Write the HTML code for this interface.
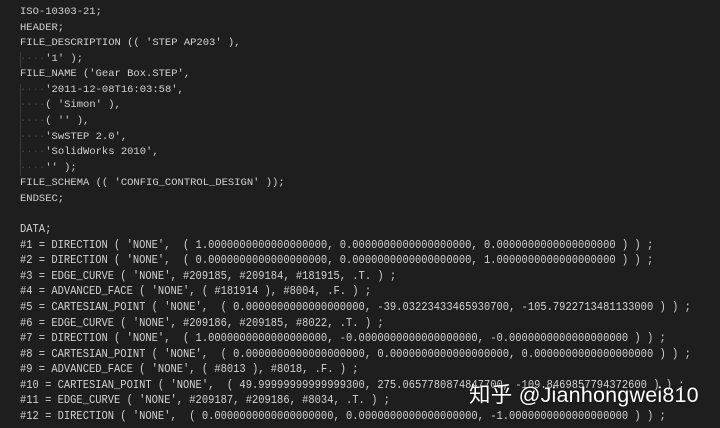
<!DOCTYPE html>
<html><head><meta charset="utf-8"><style>
html,body{margin:0;padding:0;background:#1e1e1e;width:720px;height:428px;overflow:hidden}
pre{position:absolute;left:20px;top:5px;margin:0;font-family:"Liberation Mono","DejaVu Sans Mono",monospace;font-size:10.5px;line-height:15.58px;color:#d2d2d2}
.d{color:#4a4a4a}
.c{display:inline-block;transform:scale(0.995,1.12);transform-origin:left center}
.g{position:absolute;left:20px;width:1px;background:#3a3a3a}
.wm{position:absolute;left:469px;top:378px;font-family:"Liberation Sans","Noto Sans CJK SC",sans-serif;font-size:21.5px;color:#fff;letter-spacing:0.2px;text-shadow:0 0 2px rgba(0,0,0,.6)}
</style></head><body>
<div class="g" style="top:52px;height:16px"></div>
<div class="g" style="top:84px;height:92px"></div>
<pre>ISO-10303-21;
HEADER;
FILE_DESCRIPTION (( 'STEP AP203' ),
<span class="d">····</span>'1' );
FILE_NAME ('Gear Box.STEP',
<span class="d">····</span>'2011-12-08T16:03:58',
<span class="d">····</span>( 'Simon' ),
<span class="d">····</span>( '' ),
<span class="d">····</span>'SwSTEP 2.0',
<span class="d">····</span>'SolidWorks 2010',
<span class="d">····</span>'' );
FILE_SCHEMA (( 'CONFIG_CONTROL_DESIGN' ));
ENDSEC;

<span class="c">DATA;</span>
<span class="c">#1 = DIRECTION ( 'NONE',  ( 1.0000000000000000000, 0.0000000000000000000, 0.0000000000000000000 ) ) ;</span>
<span class="c">#2 = DIRECTION ( 'NONE',  ( 0.0000000000000000000, 0.0000000000000000000, 1.0000000000000000000 ) ) ;</span>
<span class="c">#3 = EDGE_CURVE ( 'NONE', #209185, #209184, #181915, .T. ) ;</span>
<span class="c">#4 = ADVANCED_FACE ( 'NONE', ( #181914 ), #8004, .F. ) ;</span>
<span class="c">#5 = CARTESIAN_POINT ( 'NONE',  ( 0.0000000000000000000, -39.03223433465930700, -105.7922713481133000 ) ) ;</span>
<span class="c">#6 = EDGE_CURVE ( 'NONE', #209186, #209185, #8022, .T. ) ;</span>
<span class="c">#7 = DIRECTION ( 'NONE',  ( 1.0000000000000000000, -0.0000000000000000000, -0.0000000000000000000 ) ) ;</span>
<span class="c">#8 = CARTESIAN_POINT ( 'NONE',  ( 0.0000000000000000000, 0.0000000000000000000, 0.0000000000000000000 ) ) ;</span>
<span class="c">#9 = ADVANCED_FACE ( 'NONE', ( #8013 ), #8018, .F. ) ;</span>
<span class="c">#10 = CARTESIAN_POINT ( 'NONE',  ( 49.99999999999999300, 275.0657780874847700, -109.8469857794372600 ) ) ;</span>
<span class="c">#11 = EDGE_CURVE ( 'NONE', #209187, #209186, #8034, .T. ) ;</span>
<span class="c">#12 = DIRECTION ( 'NONE',  ( 0.0000000000000000000, 0.0000000000000000000, -1.0000000000000000000 ) ) ;</span>
</pre>
<div class="wm">知乎 @Jianhongwei810</div>
</body></html>
